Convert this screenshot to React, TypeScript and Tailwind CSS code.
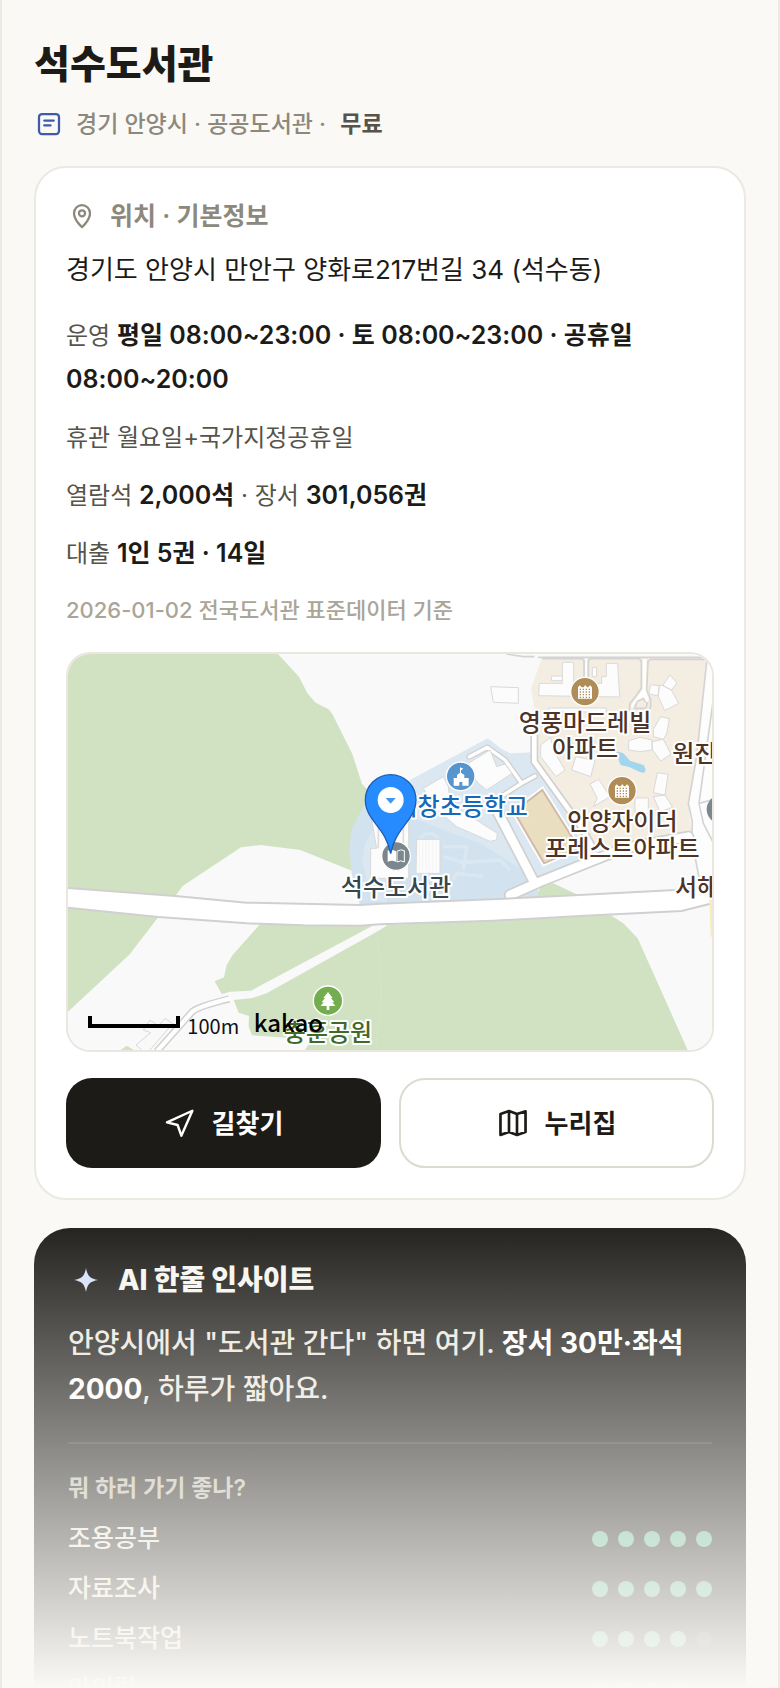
import type { ReactNode } from 'react';

const ratings = [
  { label: '조용공부', score: 5 },
  { label: '자료조사', score: 5 },
  { label: '노트북작업', score: 4 },
  { label: '아이랑', score: 4 },
];

function MapLabel({ x, y, fill, children }: { x: number; y: number; fill: string; children: ReactNode }) {
  return (
    <text
      x={x}
      y={y}
      fill={fill}
      stroke="#fff"
      strokeWidth={12}
      strokeLinejoin="round"
      paintOrder="stroke"
      textAnchor="middle"
      fontSize={72}
      fontWeight={500}
    >
      {children}
    </text>
  );
}

function ApartmentMarker({ x, y }: { x: number; y: number }) {
  return (
    <g transform={`translate(${x} ${y})`}>
      <circle r={43} fill="#b08d57" stroke="#fff" strokeWidth={4} />
      <path d="M-21 21V-13l5-6 6 6h6l5-7 5 7h4l5-6 6 6v34Z" fill="#fff" />
      <path
        d="M-16-7h32M-16 1h32M-16 9h32M-16 17h32"
        stroke="#b08d57"
        strokeWidth={4}
        strokeDasharray="4 5"
        fill="none"
      />
    </g>
  );
}

function LibraryMap() {
  return (
    <svg
      viewBox="54 42 1932 1188"
      preserveAspectRatio="xMidYMid slice"
      className="block h-[396px] w-full font-['Noto_Sans_CJK_KR','Noto_Sans',sans-serif]"
      role="img"
      aria-label="석수도서관"
    >
      <rect x={54} y={42} width={1932} height={1188} fill="#f9f9f9" />

      {/* woods */}
      <g fill="#d0e2c2">
        <path d="M54 42H684L748 112 772 160 797 188 836 208 848 224 907 342 936 432 965 462 940 520 920 600 905 692 751 630 633 615 573 622 398 738 376 768 54 744Z" />
        <path d="M54 803 325 831 239 943 54 1115Z" />
        <path d="M630 853 548 945 530 975 522 1012 494 1024 515 1062 540 1055 603 1052 972 855Z" />
        <path d="M990 870 1013 855 1682 826 1720 850 1763 895 1913 1230H765L797 1180 735 1195 606 1186 596 1160 597 1128 566 1118 551 1080 608 1074 650 1060Z" />
        <path d="M212 1230 230 1217 252 1230Z" />
        <path d="M1455 775 1475 735 1510 730 1595 770Z" />
      </g>
      <path d="M982 870 994 1060 978 1230" stroke="#dce9d2" strokeWidth={2} fill="none" strokeDasharray="10 8" />

      {/* school and library grounds */}
      <path d="M945 490 905 570 898 625 905 700 930 797 1465 780 1460 600 1080 500Z" fill="#d2e3ef" />
      <path d="M975 560 945 610 936 660 950 720 980 780 1010 790 1010 560Z" fill="#dbe8f1" />
      <path d="M1080 420 1313 295 1355 327 1380 340 1450 337 1456 380 1590 575 1620 655 1460 715 1290 610 1220 585 1080 530Z" fill="#dbe8f1" />
      <path d="M1070 545 1170 600 1390 690 1445 740 1340 770 1300 765 1205 740 1100 600Z" fill="#d2e3ef" />
      <path d="M1110 600a30 30 0 0 1 56 0M1180 620 1250 620 1240 690M1180 650 1240 668 1350 660 1380 690M1210 720 1220 700 1300 710" stroke="#dbe8f1" strokeWidth={10} fill="none" strokeLinejoin="round" />

      <g transform="translate(990)">
        {/* apartment blocks */}
        <path d="M487 52H980L950 350 925 490 935 585 720 640 610 620 475 365 465 215 453 145Z" fill="#f4ede1" />
        <path d="M980 52 950 350 925 490 937 545 935 590 960 720H1001V52Z" fill="#fdfdfd" />
        <g fill="none" stroke="#d4d4d4" strokeWidth={5}>
          <path d="M380 42 430 50H463M474 52H980" />
          <path d="M487 56H606L612 62V110M625 110V62L632 56H778L784 64V145L770 165 750 190 748 210 770 225" />
          <path d="M980 58H812L804 64 800 150 812 178V200L800 225M770 185 790 176 802 190 798 205H765Z" />
          <path d="M980 65 950 350 925 490 937 545 935 590M945 650 957 712M1001 170 957 490 970 550 1001 610M957 490 1001 478" />
        </g>
        <path d="M616 56H621V112H616ZM788 58H800L797 150 806 178 800 188 792 170 772 180 756 205 752 198 775 165 788 148Z" fill="#fff" />
        <g fill="none" strokeLinecap="round" strokeLinejoin="round">
          <path d="M463 282V365L600 555 640 625" stroke="#d0d0d0" strokeWidth={24} />
          <path d="M463 282V365L600 555 640 625" stroke="#fff" strokeWidth={14} />
          <path d="M268 350 322 322 375 360 425 430 465 408M425 430 350 478" stroke="#d0d0d0" strokeWidth={18} />
          <path d="M268 350 322 322 375 360 425 430 465 408M425 430 350 478" stroke="#fff" strokeWidth={10} />
          <path d="M345 500 462 725M390 765 480 725 730 625 925 590" stroke="#d0d0d0" strokeWidth={36} />
          <path d="M345 500 462 725M390 765 480 725 730 625 925 590" stroke="#fff" strokeWidth={26} />
        </g>
        <path d="M402 515 487 450 597 625 492 670Z" fill="#e9dec0" stroke="#fff" strokeWidth={16} />
        <path d="M402 515 487 450 597 625 492 670Z" fill="#e9dec0" stroke="#d3b9aa" strokeWidth={6} />
        <path d="M705 332 730 340 750 362 790 375Q802 388 792 399 775 396 750 382L722 375Z" fill="#a1d6ee" />

        {/* buildings */}
        <g fill="#fcfcfc" stroke="#d9d9d9" strokeWidth={3}>
          <path d="M332 140 415 143V190L340 187Z" />
          <path d="M547 67H581V130H665V110H679V70H713L719 171 476 167 478 130H547Z" />
          <path d="M514 108H547V122H514ZM637 82H650V110H637Z" />
          <path d="M506 204H679V216H506Z" />
          <path d="M870 105 891 129 874 150 848 136ZM838 137 848 136 874 150 896 190 854 212 834 168ZM812 134 838 137 834 168 806 161Z" />
          <path d="M842 230 868 236 860 282 850 298 820 290 820 268ZM816 305 850 298 873 343 842 363 818 330ZM746 302 780 292 816 300V330L780 335 746 330Z" />
          <path d="M482 315 512 292 520 330 555 390 528 410 482 350Z" />
          <path d="M588 350 645 362 632 410 575 390Z" />
          <path d="M630 432 656 418 690 470 640 500 652 475Z" />
          <path d="M832 398 864 403 855 465 820 458ZM820 470 855 465 878 502 840 515ZM765 474H805V520H765Z" />
          <path d="M265 370 330 330 350 380 375 372 396 400 320 450 295 430 280 410Z" />
          <path d="M130 445 190 410 205 440 210 490 352 580 350 600 330 604 230 560 160 500Z" />
          <path d="M110 598H180V700H108Z" />
          <path d="M-25 540H86V715H-28V625H-10Z" />
        </g>
        <path d="M118 600V694M128 600V694M138 600V694M148 600V694M158 600V694M168 600V694" stroke="#eee" strokeWidth={2} />
        <path d="M-5 545V625M70 545V660" stroke="#ddd" strokeWidth={5} />
      </g>

      {/* footpath at the lower left */}
      <g fill="none" strokeLinejoin="round">
        <path d="M320 1235 425 1117Q440 1100 538 1077" stroke="#d0d0d0" strokeWidth={22} />
        <path d="M320 1235 425 1117Q440 1100 542 1075" stroke="#fff" strokeWidth={13} />
        <path d="M275 1230 258 1215 302 1178 280 1170 300 1140 325 1158 345 1135 370 1152M300 1230 360 1160" stroke="#d8d8d8" strokeWidth={3} />
      </g>

      {/* main road */}
      <path
        d="M40 743 376 768 590 788 930 795 990 791 1390 775 1588 765 1875 750 2010 735V790L1975 793 1895 813 1590 828 1330 842 990 853 930 857 760 856 590 850 325 831 40 802Z"
        fill="#fff"
        stroke="#d0d0d0"
        strokeWidth={6}
      />
      <path d="M1978 778H1990V890H1982Z" fill="#f6edb8" />

      <g>
        <circle cx={834} cy={1082} r={44} fill="#74ad4f" stroke="#fff" strokeWidth={4} />
        <path d="M834 1056 848 1074H843L853 1087H847L856 1098H838V1110H830V1098H812L821 1087H815L825 1074H820Z" fill="#fff" />
      </g>
      <g>
        <circle cx={1232} cy={409} r={43} fill="#5795cf" stroke="#fff" strokeWidth={4} />
        <path d="M1230 382 1240 386 1233 391V398L1243 405V414H1256V437H1237V426H1228V437H1211V414H1221V405L1230 398Z" fill="#fff" />
      </g>
      <g>
        <circle cx={1038} cy={648} r={43} fill="#7b868d" stroke="#fff" strokeWidth={4} />
        <path d="M1013 632Q1026 626 1038 634V666Q1026 659 1013 666Z" fill="#fff" />
        <path d="M1041 634Q1053 626 1063 632V666Q1053 659 1041 666Z" fill="none" stroke="#fff" strokeWidth={3} />
      </g>
      <ApartmentMarker x={1605} y={155} />
      <ApartmentMarker x={1716} y={452} />
      <circle cx={2013} cy={508} r={43} fill="#7b868d" />

      <MapLabel x={1605} y={272} fill="#4d3426">영풍마드레빌</MapLabel>
      <MapLabel x={1605} y={352} fill="#4d3426">아파트</MapLabel>
      <MapLabel x={1717} y={571} fill="#4d3426">안양자이더</MapLabel>
      <MapLabel x={1717} y={651} fill="#4d3426">포레스트아파트</MapLabel>
      <MapLabel x={1933} y={367} fill="#4d3426">원진</MapLabel>
      <MapLabel x={1941} y={767} fill="#4d3426">서해</MapLabel>
      <MapLabel x={1235} y={526} fill="#1668b8">석창초등학교</MapLabel>
      <MapLabel x={1038} y={767} fill="#37454c">석수도서관</MapLabel>
      <MapLabel x={834} y={1203} fill="#41692a">충훈공원</MapLabel>

      <path
        d="M1022 641C1012 590 990 570 965 535 953 518 946 502 946 480A76 76 0 0 1 1098 480C1098 502 1091 518 1079 535 1054 570 1032 590 1022 641Z"
        fill="#258bff"
        stroke="#1c60b5"
        strokeWidth={4}
      />
      <circle cx={1022} cy={480} r={39} fill="#fff" />
      <path d="M1007 474H1037L1022 491Z" fill="#4396ee" />

      <path d="M120 1128V1158H384V1128" fill="none" stroke="#000" strokeWidth={12} />
      <text x={412} y={1182} fontSize={60} fill="#111">100m</text>
      <text x={611} y={1176} fontSize={72} fontWeight={500} fill="#000">kakao</text>
    </svg>
  );
}

function ScoreDots({ label, score }: { label: string; score: number }) {
  return (
    <div className="flex gap-[10px]" role="img" aria-label={`${label} ${score}/5`}>
      {[1, 2, 3, 4, 5].map((n) => (
        <span key={n} className={`size-4 rounded-full ${n <= score ? 'bg-[#5fb592]' : 'bg-white/15'}`} />
      ))}
    </div>
  );
}

export default function App() {
  return (
    <main className="relative h-screen overflow-hidden border-x-2 border-[#ebe9e2] bg-[#faf9f5] px-8 pt-9 font-['Inter','Noto_Sans_CJK_KR',sans-serif] text-[#1c1b17]">
      <h1 className="text-[39px] leading-[56px] font-extrabold">석수도서관</h1>

      <div className="mt-[14px] flex items-center gap-3 text-[23px] leading-9 font-medium text-[#8c887c]">
        <svg viewBox="0 0 24 24" className="size-[30px]" fill="none" stroke="#3f59ab" strokeWidth={1.8} strokeLinecap="round" aria-hidden="true">
          <rect x={4} y={4} width={16} height={16} rx={2.4} />
          <path d="M8.2 9.2h7.6M8.2 13.1h5" />
        </svg>
        <p>
          경기 안양시 · 공공도서관 · <strong className="ml-2 font-semibold text-[#56534a]">무료</strong>
        </p>
      </div>

      <section className="mt-6 rounded-[32px] border-2 border-[#ebe9e2] bg-white p-[30px]">
        <h2 className="flex items-center gap-3 text-[25px] leading-9 font-semibold text-[#8c887c]">
          <svg viewBox="0 0 24 24" className="size-8" fill="none" stroke="currentColor" strokeWidth={1.7} strokeLinejoin="round" aria-hidden="true">
            <path d="M12 20.3s-6-5.2-6-10.4a6 6 0 0 1 12 0c0 5.2-6 10.4-6 10.4Z" />
            <circle cx={12} cy={10} r={2.3} />
          </svg>
          위치 · 기본정보
        </h2>
        <p className="mt-4 text-[26px] leading-10">경기도 안양시 만안구 양화로217번길 34 (석수동)</p>
        <div className="mt-6 flex flex-col gap-[14px] text-[24px] leading-[44px] text-[#56534a] [&_strong]:text-[25px] [&_strong]:font-semibold [&_strong]:leading-none [&_strong]:text-[#1c1b17]">
          <p>
            운영 <strong>평일 08:00~23:00 · 토 08:00~23:00 · 공휴일 08:00~20:00</strong>
          </p>
          <p>휴관 월요일+국가지정공휴일</p>
          <p>
            열람석 <strong>2,000석</strong> · 장서 <strong>301,056권</strong>
          </p>
          <p>
            대출 <strong>1인 5권 · 14일</strong>
          </p>
        </div>
        <p className="mt-4 text-[22px] leading-9 font-medium text-[#aaa598]">2026-01-02 전국도서관 표준데이터 기준</p>

        <div className="mt-6 overflow-hidden rounded-3xl border-2 border-[#ebe7e0]">
          <LibraryMap />
        </div>

        <div className="mt-[26px] grid grid-cols-2 gap-[18px]">
          <button type="button" className="flex h-[90px] items-center justify-center gap-4 rounded-[26px] bg-[#1c1b17] text-[26px] font-bold text-white">
            <svg viewBox="0 0 24 24" className="size-8" fill="none" stroke="currentColor" strokeWidth={1.8} strokeLinejoin="round" aria-hidden="true">
              <path d="M21.3 2.8 2.2 11.5l8 2 2.8 8Z" />
            </svg>
            길찾기
          </button>
          <button type="button" className="flex h-[90px] items-center justify-center gap-4 rounded-[26px] border-2 border-[#dddad1] bg-white text-[26px] font-bold">
            <svg viewBox="0 0 24 24" className="size-8" fill="none" stroke="currentColor" strokeWidth={2} strokeLinejoin="round" aria-hidden="true">
              <path d="M2.6 5.2 9 3l6 2.3 6.4-2.1v15.6L15 21l-6-2.3-6.4 2.2ZM9 3v15.7M15 5.3V21" />
            </svg>
            누리집
          </button>
        </div>
      </section>

      <section className="mt-7 rounded-[36px] bg-[#1c1b17] px-[34px] pt-8 pb-10 text-[#ebe8df]">
        <h2 className="flex items-center gap-[14px] text-[28px] leading-10 font-extrabold text-[#f7f5f0]">
          <svg viewBox="0 0 36 36" className="size-9" fill="#d5dffa" aria-hidden="true">
            <path d="M18 6c1.5 8 4 10.500 12 12-8 1.500-10.500 4-12 12-1.500-8-4-10.500-12-12 8-1.500 10.500-4 12-12Z" />
          </svg>
          AI 한줄 인사이트
        </h2>
        <p className="mt-5 text-[28px] leading-[46px] font-medium">
          안양시에서 "도서관 간다" 하면 여기. <strong className="font-bold text-white">장서 30만·좌석 2000</strong>, 하루가 짧아요.
        </p>
        <hr className="mt-[30px] border-t-2 border-white/10" />
        <h3 className="mt-6 text-[23px] leading-10 font-semibold text-[#beb9ac]">뭐 하러 가기 좋나?</h3>
        <ul className="mt-[6px] text-[25px] font-medium">
          {ratings.map(({ label, score }) => (
            <li key={label} className="flex h-[50px] items-center justify-between">
              {label}
              <ScoreDots label={label} score={score} />
            </li>
          ))}
        </ul>
      </section>

      <div className="pointer-events-none absolute -inset-x-[2px] bottom-0 h-[480px] bg-linear-to-b from-[#faf9f5]/0 to-[#faf9f5]" />
    </main>
  );
}
